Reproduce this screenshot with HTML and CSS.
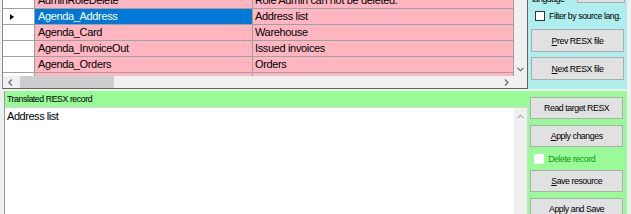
FILE: index.html
```html
<!DOCTYPE html>
<html>
<head>
<meta charset="utf-8">
<link rel="stylesheet" href="styles.css">
</head>
<body>
<div class="app">
  <div class="top">
    <div class="grid">
      <div class="grid-main">
        <div class="data">
          <div class="rows">
            <div class="row"><div class="rh"></div><div class="c1">AdminRoleDelete</div><div class="c2">Role Admin can not be deleted.</div></div>
            <div class="row sel"><div class="rh"><span class="tri"></span></div><div class="c1">Agenda_Address</div><div class="c2">Address list</div></div>
            <div class="row"><div class="rh"></div><div class="c1">Agenda_Card</div><div class="c2">Warehouse</div></div>
            <div class="row"><div class="rh"></div><div class="c1">Agenda_InvoiceOut</div><div class="c2">Issued invoices</div></div>
            <div class="row"><div class="rh"></div><div class="c1">Agenda_Orders</div><div class="c2">Orders</div></div>
            <div class="row"><div class="rh"></div><div class="c1"></div><div class="c2"></div></div>
          </div>
        </div>
        <div class="vscroll">
          <svg class="arrow-down" width="7" height="5" viewBox="0 0 7 5"><path d="M0.5 0.8 L3.5 3.8 L6.5 0.8" fill="none" stroke="#606060" stroke-width="1.1"/></svg>
        </div>
      </div>
      <div class="hscroll">
        <div class="hbar">
          <svg class="arrow" width="5" height="7" viewBox="0 0 5 7"><path d="M3.8 0.5 L0.8 3.5 L3.8 6.5" fill="none" stroke="#606060" stroke-width="1.1"/></svg>
          <div class="thumb"></div>
          <div class="track"></div>
          <svg class="arrow" width="5" height="7" viewBox="0 0 5 7"><path d="M1 0.5 L4 3.5 L1 6.5" fill="none" stroke="#606060" stroke-width="1.1"/></svg>
        </div>
        <div class="corner"></div>
      </div>
    </div>
    <div class="side cyan">
      <div class="lang-row">
        <span class="lbl">language</span>
        <span class="minibtn"></span>
      </div>
      <label class="check-row first"><span class="box"></span><span class="lbl">Filter by source lang.</span></label>
      <div class="btn b-prev"><span><u>P</u>rev RESX file</span></div>
      <div class="btn b-next"><span><u>N</u>ext RESX file</span></div>
    </div>
  </div>
  <div class="bottom">
    <div class="editor">
      <div class="caption">Translated RESX record</div>
      <div class="textbox">
        <div class="text">Address list</div>
        <div class="tscroll">
          <svg width="7" height="5" viewBox="0 0 7 5"><path d="M0.5 4.2 L3.5 1.2 L6.5 4.2" fill="none" stroke="#a6a6a6" stroke-width="1.1"/></svg>
        </div>
      </div>
    </div>
    <div class="side green-side">
      <div class="btn">Read target RESX</div>
      <div class="btn gap"><span><u>A</u>pply changes</span></div>
      <label class="check-row del"><span class="box"></span><span class="lbl">Delete record</span></label>
      <div class="btn"><span><u>S</u>ave resource</span></div>
      <div class="btn gap">Apply and Save</div>
    </div>
  </div>
</div>
</body>
</html>
```

FILE: styles.css
```css
html, body {
  margin: 0;
  padding: 0;
}
body {
  width: 631px;
  height: 214px;
  overflow: hidden;
  background: #f0f0f0;
  font-family: "Liberation Sans", Arial, sans-serif;
}
.app {
  display: flex;
  flex-direction: column;
  width: 631px;
  height: 214px;
}

/* ---------- top part ---------- */
.top {
  display: flex;
  height: 89px;
}
.grid {
  margin-left: 2px;
  width: 524px;
  border-left: 1px solid #8c8c8c;
  border-right: 1px solid #646464;
  border-bottom: 1px solid #646464;
  display: flex;
  flex-direction: column;
  background: #ababab;
}
.grid-main {
  display: flex;
  height: 76px;
}
.data {
  width: 511px;
  height: 76px;
  overflow: hidden;
  background: #ababab;
}
.rows {
  margin-top: -7px;
}
.row {
  display: flex;
  height: 15px;
  border-bottom: 1px solid #a0a0a0;
  font-size: 11px;
  letter-spacing: -0.35px;
  line-height: 15px;
  color: #000;
}
.rh {
  width: 31px;
  border-right: 1px solid #a0a0a0;
  background: #ffffff;
  display: flex;
  align-items: center;
}
.tri {
  margin-left: 7px;
  width: 0;
  height: 0;
  border-top: 3.5px solid transparent;
  border-bottom: 3.5px solid transparent;
  border-left: 4px solid #000;
}
.c1 {
  width: 214px;
  padding-left: 3px;
  border-right: 1px solid #a0a0a0;
  background: #ffb6c1;
  white-space: nowrap;
  overflow: hidden;
}
.c2 {
  width: 258px;
  padding-left: 2px;
  border-right: 1px solid #a0a0a0;
  background: #ffb6c1;
  white-space: nowrap;
  overflow: hidden;
}
.row.sel .c1 {
  background: #0078d7;
  color: #ffffff;
}
.vscroll {
  width: 13px;
  background: #f0f0f0;
  display: flex;
  flex-direction: column;
  justify-content: flex-end;
  align-items: center;
  padding-bottom: 4px;
  box-sizing: border-box;
}
.hscroll {
  display: flex;
  height: 12px;
}
.hbar {
  width: 511px;
  display: flex;
  align-items: center;
  background: #f0f0f0;
}
.hbar .arrow {
  flex: none;
  margin: 0 5px;
}
.thumb {
  width: 94px;
  height: 12px;
  background: #cdcdcd;
  margin-left: 2px;
}
.track {
  flex: 1;
}
.corner {
  width: 13px;
  background: #f0f0f0;
}

/* ---------- side panels ---------- */
.side {
  display: flex;
  flex-direction: column;
  box-sizing: border-box;
  width: 99px;
}
.cyan {
  background: #afeeee;
  height: 89px;
  padding-left: 3px;
}
.lang-row {
  display: flex;
  justify-content: space-between;
  margin-top: -6px;
  height: 10px;
  align-items: flex-start;
}
.lang-row .lbl {
  font-size: 8.8px;
  letter-spacing: -0.45px;
  line-height: 10px;
  margin-left: 1px;
  color: #000;
}
.minibtn {
  width: 46px;
  height: 7px;
  margin-right: 2px;
  background: #e1e1e1;
  border: 1px solid #adadad;
}
.check-row {
  display: flex;
  align-items: center;
  height: 23px;
  padding-left: 4px;
}
.check-row.first {
  margin-top: 4px;
  height: 15px;
}
.box {
  width: 8px;
  height: 8px;
  background: #fff;
  border: 1px solid #333;
  flex: none;
}
.check-row .lbl {
  margin-left: 4px;
  font-size: 8.8px;
  letter-spacing: -0.45px;
  color: #000;
  white-space: nowrap;
}
.check-row.del .box {
  border-color: #ffffff;
}
.check-row.del .lbl {
  color: #0a9a0a;
}
.btn {
  width: 93px;
  height: 22px;
  box-sizing: border-box;
  background: #e1e1e1;
  border: 1px solid #adadad;
  display: flex;
  align-items: center;
  justify-content: center;
  font-size: 8.8px;
  letter-spacing: -0.45px;
  color: #000;
  white-space: nowrap;
  flex: none;
}
.btn u {
  text-decoration: underline;
  text-underline-offset: 1px;
}
.b-prev {
  margin-top: 6px;
  height: 23px;
}
.b-next {
  margin-top: 5px;
  height: 23px;
}

/* ---------- bottom part ---------- */
.bottom {
  display: flex;
  margin-top: 2px;
  margin-left: 4px;
  width: 623px;
  flex: 1;
  background: #98fb98;
  border-left: 1px solid #9a9a9a;
  box-sizing: border-box;
}
.editor {
  width: 524px;
  display: flex;
  flex-direction: column;
}
.caption {
  height: 16px;
  line-height: 17px;
  padding-left: 2px;
  font-size: 8.8px;
  letter-spacing: -0.45px;
  color: #000;
}
.textbox {
  flex: 1;
  display: flex;
  background: #ffffff;
  border-top: 1px solid #d8d8d8;
  border-right: 1px solid #d8d8d8;
}
.text {
  flex: 1;
  padding: 1px 0 0 2px;
  font-size: 11px;
  letter-spacing: -0.45px;
  line-height: 14px;
  color: #000;
}
.tscroll {
  width: 13px;
  background: #f0f0f0;
  display: flex;
  justify-content: center;
  padding-top: 6px;
  box-sizing: border-box;
}
.green-side {
  padding-left: 2px;
  padding-top: 6px;
}
.green-side .gap {
  margin-top: 6px;
}
```
